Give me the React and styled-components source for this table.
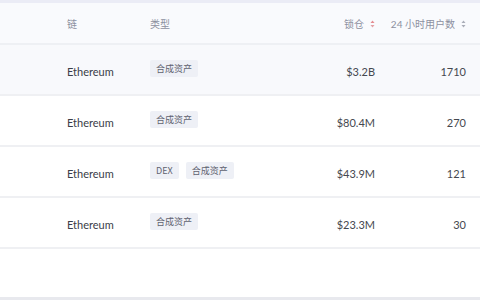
import React from "react";
import styled, { createGlobalStyle } from "styled-components";

const Global = createGlobalStyle`
  html, body { margin: 0; padding: 0; background: #ffffff; }
  body { font-family: Lato, "Noto Sans CJK SC", sans-serif; }
`;

const Page = styled.div`
  width: 480px;
  height: 300px;
  overflow: hidden;
  background: #ffffff;
  border-top: 3px solid #ebecf6;
  box-sizing: border-box;
  display: flex;
  flex-direction: column;
`;

const cols = `67px 83px 1fr 90px 91px`;

const HeaderRow = styled.div`
  display: grid;
  grid-template-columns: ${cols};
  padding-right: 14px;
  height: 40px;
  align-items: center;
  background: #f9fafd;
  border-bottom: 2px solid #eef0f4;
  color: #8c90a0;
  font-size: 10px;
`;

const HeadCell = styled.div`
  display: flex;
  align-items: center;
  justify-content: ${(p) => (p.$right ? "flex-end" : "flex-start")};
  gap: 6px;
  padding-top: 1px;
  font-family: Lato, "Noto Sans CJK SC", sans-serif;
`;

const Row = styled.div`
  display: grid;
  grid-template-columns: ${cols};
  padding-right: 14px;
  height: 49px;
  align-items: center;
  background: ${(p) => (p.$active ? "#f8f9fc" : "#ffffff")};
  border-bottom: 2px solid #eff0f3;
  color: #3a3d48;
  font-size: 11px;
`;

const Cell = styled.div`
  display: flex;
  align-items: center;
  justify-content: ${(p) => (p.$right ? "flex-end" : "flex-start")};
  gap: 7px;
  padding-top: ${(p) => (p.$right ? "3px" : "0")};
  color: ${(p) => (p.$right ? "#45484f" : "#3a3d48")};
`;

const ChainText = styled.span`
  padding-top: 4px;
`;

const Tag = styled.span`
  display: inline-flex;
  align-items: center;
  height: 17px;
  padding: 0 6px;
  background: #eef0f6;
  border-radius: 2px;
  color: #5f6270;
  font-size: 9px;
  font-family: "Noto Sans CJK SC", Lato, sans-serif;
  margin-top: ${(p) => (p.$up ? "-2px" : "0")};
`;

const Spacer = styled.div`
  flex: 1;
`;

const Footer = styled.div`
  height: 3px;
  background: #e8e9ee;
`;

const SortIcon = ({ active }) => (
  <svg width="5" height="8" viewBox="0 0 5 8">
    <path d="M2.5 0.5 L4.5 3 L0.5 3 Z" fill={active ? "#e58a8f" : "#a9adb8"} />
    <path d="M2.5 7.5 L4.5 5 L0.5 5 Z" fill={active ? "#e2a0a5" : "#a9adb8"} />
  </svg>
);

const rows = [
  { tags: ["合成资产"], tvl: "$3.2B", users: "1710", active: true },
  { tags: ["合成资产"], tvl: "$80.4M", users: "270" },
  { tags: ["DEX", "合成资产"], tvl: "$43.9M", users: "121" },
  { tags: ["合成资产"], tvl: "$23.3M", users: "30" },
];

export default function App() {
  return (
    <>
      <Global />
      <Page>
        <HeaderRow>
          <HeadCell />
          <HeadCell>链</HeadCell>
          <HeadCell>类型</HeadCell>
          <HeadCell $right>
            锁仓 <SortIcon active />
          </HeadCell>
          <HeadCell $right>
            24 小时用户数 <SortIcon />
          </HeadCell>
        </HeaderRow>
        {rows.map((r, i) => (
          <Row key={i} $active={r.active}>
            <Cell />
            <Cell>
              <ChainText>Ethereum</ChainText>
            </Cell>
            <Cell>
              {r.tags.map((t) => (
                <Tag key={t} $up>
                  {t}
                </Tag>
              ))}
            </Cell>
            <Cell $right>{r.tvl}</Cell>
            <Cell $right>{r.users}</Cell>
          </Row>
        ))}
        <Spacer />
        <Footer />
      </Page>
    </>
  );
}
